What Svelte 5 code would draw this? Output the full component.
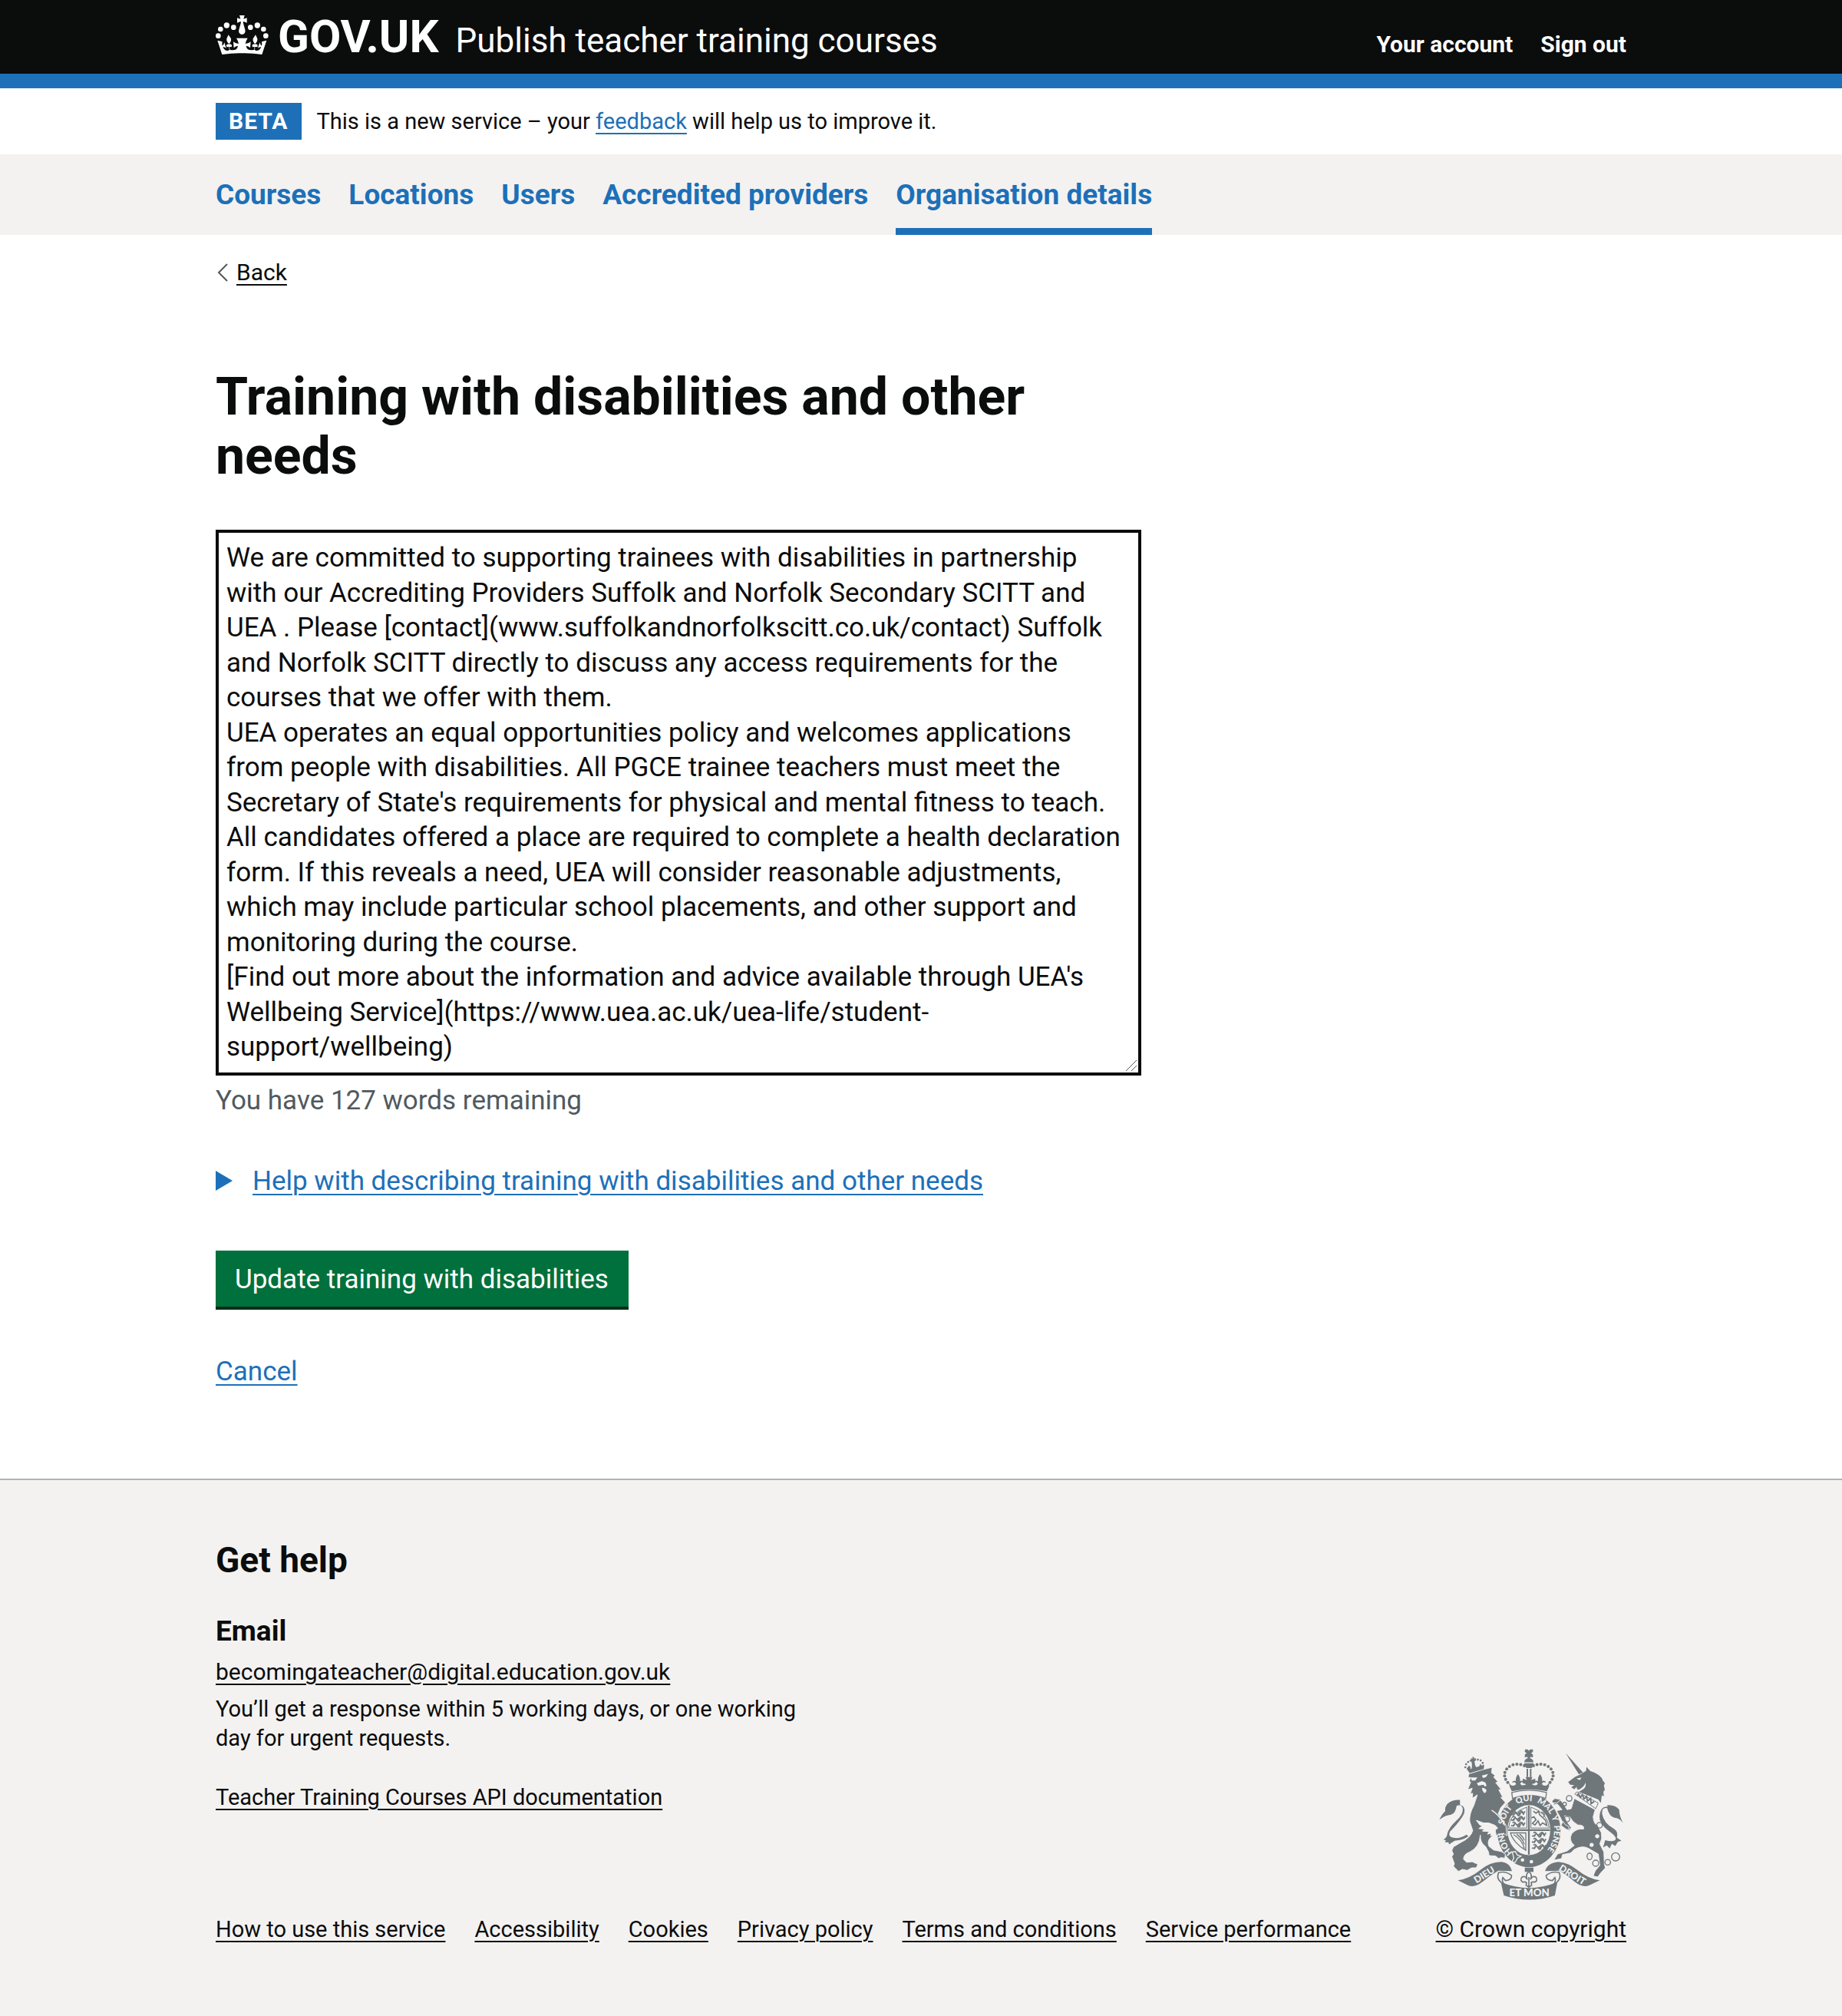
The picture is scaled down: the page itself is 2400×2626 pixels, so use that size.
<script>
  const navItems = [
    { label: 'Courses' },
    { label: 'Locations' },
    { label: 'Users' },
    { label: 'Accredited providers' },
    { label: 'Organisation details', current: true }
  ];

  const footerLinks = [
    'How to use this service',
    'Accessibility',
    'Cookies',
    'Privacy policy',
    'Terms and conditions',
    'Service performance'
  ];

  let answer = $state(
    [
      'We are committed to supporting trainees with disabilities in partnership with our Accrediting Providers Suffolk and Norfolk Secondary SCITT and UEA . Please [contact](www.suffolkandnorfolkscitt.co.uk/contact) Suffolk and Norfolk SCITT directly to discuss any access requirements for the courses that we offer with them.',
      "UEA operates an equal opportunities policy and welcomes applications from people with disabilities. All PGCE trainee teachers must meet the Secretary of State's requirements for physical and mental fitness to teach. All candidates offered a place are required to complete a health declaration form. If this reveals a need, UEA will consider reasonable adjustments, which may include particular school placements, and other support and monitoring during the course.",
      "[Find out more about the information and advice available through UEA's Wellbeing Service](https://www.uea.ac.uk/uea-life/student-support/wellbeing)"
    ].join('\n')
  );

  // Beads on the left arch of the royal crown; the right arch mirrors them.
  const beads = [[404, 118], [390, 113], [375, 112], [360, 114], [346, 121], [335, 131], [328, 144], [327, 158], [331, 171], [339, 183]];
  const lionBeads = [[173, 124], [176, 112], [184, 103], [194, 98], [210, 96], [222, 94], [233, 97], [241, 107], [243, 118]];
  const shieldLions = [[352, 300], [352, 322], [352, 344], [434, 384], [434, 408], [434, 432]];
</script>

<header class="header">
  <div class="container header-row">
    <div class="brand">
      <a class="logo" href="#govuk">
        <svg class="crown" viewBox="33 30 207 153" aria-hidden="true">
          <defs>
            <path id="crown-half" d="M137 178Q97 177 58 183L40 128l19 5q-2 9 0 16 6-4 8-13l7 22q-8-5-13-4 6 14 18 14 9-1 9-9-1-9-12-5-5-12 10-12-12-9-10-21l7-15 10 15q2 12-8 21 15 0 10 12-9-3-10 4 0 8 15 8 18 0 20-17-9 0-16 8l-2-24q9 8 21 8-2-12-9-22h23z" />
          </defs>
          <g fill="#fff">
            <circle cx="43" cy="110" r="10" /><circle cx="52" cy="84" r="10" />
            <circle cx="76" cy="69" r="11" /><circle cx="103" cy="77" r="10" />
            <circle cx="169" cy="77" r="10" /><circle cx="196" cy="69" r="11" />
            <circle cx="220" cy="84" r="10" /><circle cx="229" cy="110" r="10" />
            <path d="M126 30h20l-4 14 13-4v19l-13-5-2 4 8 28c3 12-5 18-12 18s-15-6-12-18l8-28-2-4-13 5V40l13 4z" />
            <use href="#crown-half" />
            <use href="#crown-half" transform="translate(272 0) scale(-1 1)" />
          </g>
        </svg>GOV.UK</a>
      <a class="product" href="#service">Publish teacher training courses</a>
    </div>
    <nav class="account" aria-label="Account">
      <a href="#account">Your account</a>
      <a href="#signout">Sign out</a>
    </nav>
  </div>
</header>

<div class="container phase">
  <strong class="tag">BETA</strong>
  <span>This is a new service – your <a class="link" href="#feedback">feedback</a> will help us to improve it.</span>
</div>

<nav class="primary" aria-label="Primary">
  <ul class="container">
    {#each navItems as item}
      <li><a href="#nav" class:current={item.current} aria-current={item.current ? 'page' : undefined}>{item.label}</a></li>
    {/each}
  </ul>
</nav>

<div class="container main">
  <a class="back" href="#back">
    <svg viewBox="0 0 14 24" aria-hidden="true"><path d="M13 1 2 12l11 11" fill="none" stroke="#505a5f" stroke-width="2" /></svg>
    <span>Back</span>
  </a>
  <main>
    <h1><label for="answer">Training with disabilities and other needs</label></h1>
    <div class="field">
      <textarea id="answer" rows="15" spellcheck="false" aria-describedby="remaining" bind:value={answer}></textarea>
      <svg class="grip" viewBox="0 0 14 14" aria-hidden="true"><path d="M0 14 14 0M7 14l7-7" fill="none" stroke="#555" stroke-width="1" /></svg>
    </div>
    <p id="remaining" class="hint">You have 127 words remaining</p>
    <details>
      <summary>
        <svg viewBox="0 0 22 26" aria-hidden="true"><path d="M0 0 22 13 0 26z" fill="#1d70b8" /></svg>
        <span>Help with describing training with disabilities and other needs</span>
      </summary>
    </details>
    <button type="submit">Update training with disabilities</button>
    <p class="cancel"><a class="link" href="#cancel">Cancel</a></p>
  </main>
</div>

<footer>
  <div class="container footer-row">
    <div class="footer-main">
      <h2>Get help</h2>
      <h3>Email</h3>
      <p class="email"><a href="#email">becomingateacher@digital.education.gov.uk</a></p>
      <p class="response">You’ll get a response within 5 working days, or one working day for urgent requests.</p>
      <p class="api"><a href="#api">Teacher Training Courses API documentation</a></p>
      <ul class="footer-links">
        {#each footerLinks as label}
          <li><a href="#footer">{label}</a></li>
        {/each}
      </ul>
    </div>
    <div class="copyright">
      <svg class="crest" viewBox="70 52 722 592" aria-hidden="true">
        <defs>
          <path id="motto-line" d="M422 484A99 114 0 0 1 422 256A99 114 0 0 1 422 484" />
        </defs>
        <g fill="#6f777b">
          <!-- royal crown -->
          <path d="M407 54h10l5 5 5-5h11v9l-7 6 7 5v11l-11-2v6h-10v-6l-11 2V74l7-5-7-6z" />
          <path d="M404 104q2-15 18-16 16 1 18 16z" /><path d="M404 108h37v6l-8 13h-21l-8-13z" />
          <path d="M413 130h6v32h-6zM426 130h6v32h-6z" />
          {#each beads as [x, y]}
            <circle cx={x} cy={y} r="6" /><circle cx={844 - x} cy={y} r="6" />
          {/each}
          <path d="M343 180q7 22 25 14 9-6-4-12l-8 3q3-12 15-7-2-14 8-27 11 13 8 27 14-5 15 7l-8-3q-10 6-2 11 8 5 20-3l-14-4v-18l16 6-5-12h27l-5 12 16-6v18l-14 4q12 8 20 3 8-5-2-11l-8 3q1-12 15-7-3-14 8-27 10 13 8 27 13-5 15 7l-8-3q-13 6-4 12 18 8 25-14l-1 20-8 18q-70-16-138 0l-8-18z" />
          <!-- garter -->
          <path fill-rule="evenodd" d="M422 229A124 143 0 1 1 422 515A124 143 0 1 1 422 229zM422 272A84 98 0 1 0 422 468A84 98 0 1 0 422 272z" />
        </g>
        <path d="M355 223q67-18 136 0l-3 23q-65-24-130 0z" fill="#f3f2f1" stroke="#6f777b" stroke-width="4" />
        <!-- shield quarters -->
        <g fill="none" stroke="#6f777b" stroke-width="5">
          <path d="M340 370h165M422 274v192" stroke-width="7" />
          <path d="M342 362q4-60 72-82v82zM430 280q66 22 72 82h-72z" stroke-width="3" />
          <path d="M350 381h60v68q-20-10-38-30-18-20-22-38zM362 388q34 20 42 54M374 386q24 18 30 40M386 386q14 10 18 24" stroke-width="4" />
          {#each shieldLions as [x, y]}
            <path d="M{x + 6} {y - 2}q6-8 12 2t14 0 14 0 8-4M{x} {y + 8}q8 4 12-4t12 4 12-2 14 4M{x + 8} {y + 12}l6-8M{x + 30} {y + 12}l4-10" />
          {/each}
          <path d="M440 296l10 8 10-8 4 14 24 22 4 20-16-10-10 10-8-18-12 16-10-6 14-14-8-12-10 4M470 300q18 2 10 18" stroke-width="5" />
        </g>
        <!-- buckle and pendant -->
        <path d="M357 456l12-2 8 14 14 4-14 8-8 16-14 0 8-16z" fill="#6f777b" stroke="#f3f2f1" stroke-width="4" />
        <path d="M376 498q46 24 94-6" fill="none" stroke="#6f777b" stroke-width="6" />
        <g fill="#f3f2f1"><circle cx="397" cy="487" r="7" /><circle cx="432" cy="494" r="7" /></g>
        <path d="M406 517h34v17h-34z" fill="#6f777b" />
        <path d="M422 532q-16 16-6 32-10-18-22-9-8 14 5 19 12-2 14 2l-2 10 11 8 11-8-2-10q2-4 14-2 13-5 5-19-12-9-22 9 10-16-6-32zM422 554v36" fill="none" stroke="#6f777b" stroke-width="5" />
        <!-- lion -->
        <g fill="#6f777b">
          <path d="M186 134q30-16 60-14l-1 14-56 14z" />
          {#each lionBeads as [x, y]}
            <circle cx={x} cy={y} r="4" />
          {/each}
          <path d="M195 88l6 2 0-7 6 0 0 7 7-2 1 7-7 1 3 18 5 12-18 4 1-16-3-18z" />
          <path d="M178 130l10-14 6 10-6 18zM224 126l8-16 10 14-8 10z" />
          <path stroke="#f3f2f1" stroke-width="3" d="M186 150l52-16 40-10-2 22 14 10-6 6 18 20-10 2 22 28-10 0 16 30-8 0 18 20-18 20-10 24 16 24 14 20 4 42-14-10-8 16-10-10-10 4-4-22 10-8-10-10q-24-14-46-10l-28-10 14 18 10 4-14 10 22 2-8 8 26 2-6 10 14-4-2 10 12-2q-30 18-18 44l18 14 30 6 16 10-2 16-16-2-8 4-12-10-26-2-2-14-12-22q-22-14-20-44-4 48-42 66-24 8-24 28l12 12 22-2 22 10-6 14-18 0-18 10-18-4-16 8-20-20 4-10-10-28 6-10-6-14 6-14 30-18q38-18 46-46l-12-36q-2-30 16-62l14-42-20 14 2-20-10 2 8-22-18 6 12-30-6-2 6-16-10 0z" />
          <path d="M152 252q-30-2-48 14-12 12-10 30-12 10-23 34 22-18 46-20 18-6 22-36 20-6 24 12 2 22-26 48-32 30-36 56 0 8-14 18l10 2-4 8 14 0 2 8 22-14 16-2q24-4 38-16l-8-6q-26 18-52 12-22-4-12-24 48-50 56-74 6-26-17-30z" />
        </g>
        <g fill="#f3f2f1">
          <path d="M194 164l26 0-8 12-14 0zM238 156l24-6-8 12-12 4zM218 186l20-8 14 6 4 12-6 4-6-8-20 4zM238 204q12 0 18 10-2 12-10 10-8-8-8-20z" />
        </g>
        <path d="M276 292q30 18 52 60" stroke="#f3f2f1" stroke-width="4" fill="none" />
        <!-- unicorn -->
        <g fill="#6f777b">
          <path d="M566 68l68 76-16 8z" />
          <path d="M624 152l22-14 2-16 14 16q44 14 50 38l8 10-4 10 4 16-6 8 2 18-8-4-4 30-10-14-76-30 8-4q24-12 18-32-6 18-26 28-10 0-8-12l-10 10-12-8 12-8-16-2-8-10 26-20z" />
          <path stroke="#f3f2f1" stroke-width="3" d="M600 246l82 44-8 28q2 28 18 34l14 28q6 24-6 44l16 32 2 48 4 14-20 22-10 14-18-4 8-20 18-22-6-44-38-22q-24-14-56 4l-14 14-32 6-4 16-30 6 14-24 38-12 28-22q-24-20-10-46 20-22 46-18 6-16-22-16-20-10-32-32l-20-4 10 24 16 22-8 14-22-26-12-26-16-28 22-4-18-22-16 4 4-18 26 0 24 36 16-4z" />
          <path stroke="#f3f2f1" stroke-width="3" d="M556 336l8 12 14 8 2 12-10 0-22-16zM512 256l12-10 24 4-16 14-16 0z" />
          <path d="M728 272q34-2 48 18 0 24 15 52-14-20-34-20-20-6-28-38-22-4-20 22 6 38 48 60 16 10 10 34l18 12-14 4-10 16-14-8-8 18-12-12-14 8 8-28q40 10 42-8-4-12-22-24-44-30-42-60 2-42 33-40z" />
        </g>
        <path d="M602 228l10-8 82 44-10 22z" fill="#f3f2f1" stroke="#6f777b" stroke-width="3" />
        <path d="M610 236l6-8 8 14 8-10 6 16 10-10 4 18 12-10 2 20 12-8" stroke="#6f777b" stroke-width="6" fill="none" />
        <path d="M608 168l20-4-6 10z" fill="#f3f2f1" />
        <g fill="#f3f2f1"><circle cx="690" cy="394" r="8" /><circle cx="668" cy="428" r="8" /></g>
        <g fill="none" stroke="#6f777b" stroke-width="4">
          <circle cx="580" cy="246" r="11" /><circle cx="562" cy="268" r="7" />
          <circle cx="571" cy="327" r="11" /><circle cx="699" cy="351" r="11" />
          <ellipse cx="660" cy="473" rx="10" ry="13" /><circle cx="684" cy="500" r="12" />
          <circle cx="731" cy="496" r="11" /><circle cx="762" cy="475" r="16" />
        </g>
        <!-- ribbon -->
        <g fill="#6f777b">
          <path d="M144 567q46-6 90-42 40-32 82-30 32 4 40 36l-54-2q-32 18-62 44-34 26-60 12z" />
          <path d="M700 567q-46-6-90-42-34-28-72-30-44 4-52 36l56-2q32 18 60 44 34 26 60 12z" />
          <path d="M312 574q110 46 222 0l-10 52q-100 34-200 0z" />
        </g>
        <g fill="#f3f2f1" stroke="#6f777b" stroke-width="5">
          <path d="M304 536q30-6 50 12 2 18-24 20l-10-12q-6 14 6 28-36-20-22-48z" />
          <path d="M540 536q-30-6-50 12-2 18 24 20l10-12q6 14-6 28 36-20 22-48z" />
        </g>
        <g class="motto" font-size="33">
          <text><textPath href="#motto-line" startOffset="70">HONI</textPath></text>
          <text><textPath href="#motto-line" startOffset="188">SOIT</textPath></text>
          <text><textPath href="#motto-line" startOffset="286">QUI</textPath></text>
          <text><textPath href="#motto-line" startOffset="366">MAL</textPath></text>
          <text><textPath href="#motto-line" startOffset="448">Y</textPath></text>
          <text><textPath href="#motto-line" startOffset="484">PENSE</textPath></text>
        </g>
        <g class="motto" text-anchor="middle">
          <text font-size="37" transform="translate(254 556) rotate(-32)">DIEU</text>
          <text font-size="40" x="424" y="630">ET MON</text>
          <text font-size="37" transform="translate(586 556) rotate(32)">DROIT</text>
        </g>
      </svg>
      <a href="#copyright">© Crown copyright</a>
    </div>
  </div>
</footer>

<style>
  :global(body) {
    margin: 0;
    background: #fff;
    color: #0b0c0c;
    font-family: Roboto, 'Liberation Sans', sans-serif;
    font-size: 35px;
    line-height: 45px;
  }

  h1, h2, h3, p, ul { margin: 0; padding: 0; }
  ul { list-style: none; }

  a {
    color: inherit;
    text-decoration-thickness: 2px;
    text-underline-offset: 5px;
  }

  .link { color: #1d70b8; }

  .container {
    box-sizing: border-box;
    max-width: 1838px;
    margin: 0 auto;
  }

  .header {
    background: #0b0c0c;
    color: #fff;
    border-bottom: 19px solid #1d70b8;
  }
  .header a { text-decoration: none; }
  .header-row {
    display: flex;
    justify-content: space-between;
    align-items: baseline;
    padding: 18px 0 13px;
  }
  .brand { display: flex; align-items: baseline; gap: 22px; }
  .logo { font-size: 60px; line-height: 60px; font-weight: 700; white-space: nowrap; }
  .crown { width: 69px; height: 51px; margin-right: 12px; vertical-align: -3px; }
  .product { font-size: 44px; line-height: 60px; }
  .account { display: flex; gap: 36px; font-size: 30px; line-height: 38px; font-weight: 700; }

  .phase {
    display: flex;
    align-items: center;
    gap: 20px;
    padding: 19px 0;
    font-size: 29px;
    line-height: 48px;
  }
  .tag {
    padding: 0 17px;
    background: #1d70b8;
    color: #fff;
    font-size: 30px;
    letter-spacing: 1px;
  }

  .primary { background: #f3f2f1; }
  .primary ul { display: flex; gap: 36px; }
  .primary a {
    display: block;
    padding: 30px 0 21px;
    border-bottom: 9px solid transparent;
    color: #1d70b8;
    font-size: 37px;
    font-weight: 700;
    text-decoration: none;
  }
  .primary .current { border-color: #1d70b8; }

  .main { padding: 30px 0 117px; }
  .back {
    display: flex;
    align-items: center;
    gap: 11px;
    width: fit-content;
    padding-left: 2px;
    font-size: 30px;
    line-height: 38px;
    text-decoration: none;
  }
  .back svg { width: 14px; height: 24px; }
  .back span {
    text-decoration: underline;
    text-decoration-thickness: 2px;
    text-underline-offset: 5px;
  }

  main { max-width: 1206px; padding-top: 105px; }
  h1 { margin-bottom: 57px; font-size: 68px; line-height: 77px; }

  .field { position: relative; }
  textarea {
    display: block;
    box-sizing: border-box;
    width: 100%;
    padding: 10px;
    border: 4px solid #0b0c0c;
    border-radius: 0;
    background: #fff;
    color: #0b0c0c;
    font-family: inherit;
    font-size: 35px;
    line-height: 1.3;
    resize: vertical;
  }
  textarea::-webkit-resizer { background: transparent; }
  .grip {
    position: absolute;
    right: 6px;
    bottom: 6px;
    width: 14px;
    height: 14px;
    pointer-events: none;
  }

  .hint { margin-top: 10px; color: #505a5f; }

  details { margin-top: 60px; }
  summary {
    display: flex;
    align-items: center;
    gap: 26px;
    color: #1d70b8;
    cursor: pointer;
    list-style: none;
  }
  summary svg { width: 22px; height: 26px; }
  summary span {
    text-decoration: underline;
    text-decoration-thickness: 2px;
    text-underline-offset: 5px;
  }

  button {
    display: block;
    margin-top: 68px;
    padding: 15px 26px 13px 25px;
    border: 0;
    border-bottom: 4px solid #002d18;
    background: #00703c;
    color: #fff;
    font-family: inherit;
    font-size: 35px;
    line-height: 45px;
  }

  .cancel { margin-top: 58px; }

  footer {
    border-top: 2px solid #b1b4b6;
    background: #f3f2f1;
    font-size: 29px;
    line-height: 38px;
  }
  .footer-row {
    display: flex;
    justify-content: space-between;
    align-items: flex-end;
    padding: 76px 0 95px;
  }
  h2 { font-size: 46px; line-height: 57px; }
  h3 { margin-top: 41px; font-size: 37px; line-height: 45px; }
  .email { margin-top: 12px; font-size: 30px; }
  .response { max-width: 800px; margin-top: 10px; }
  .api { margin-top: 39px; }
  .footer-links { display: flex; flex-wrap: wrap; gap: 10px 38px; margin-top: 134px; }
  .copyright { display: flex; flex-direction: column; align-items: center; gap: 19px; font-size: 30px; }
  .crest { width: 240px; height: 197px; }
  .motto {
    fill: #f3f2f1;
    font-family: Lato, sans-serif;
    font-weight: 900;
  }
</style>
